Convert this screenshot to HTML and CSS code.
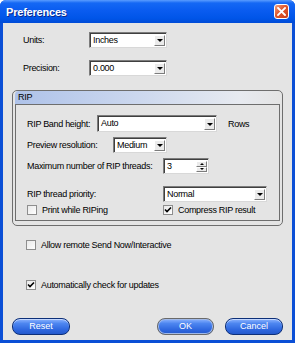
FILE: index.html
```html
<!DOCTYPE html>
<html lang="en">
<head>
    <meta charset="UTF-8">
    <title>Preferences</title>
    <link rel="stylesheet" href="styles.css">
</head>
<body>
    <div class="window">
        <!-- Title bar -->
        <div class="titlebar">
            <span class="title">Preferences</span>
            <span class="close">
                <svg width="9" height="9" viewBox="0 0 9 9"><path d="M1 1 L8 8 M8 1 L1 8" stroke="#fff" stroke-width="1.8" stroke-linecap="square"/></svg>
            </span>
        </div>

        <div class="client">
            <div class="top">
                <div class="row">
                    <span class="label label-units">Units:</span>
                    <div class="select w78"><span class="value">Inches</span><span class="arrow"></span></div>
                </div>
                <div class="row row-gap">
                    <span class="label label-units">Precision:</span>
                    <div class="select w78"><span class="value">0.000</span><span class="arrow"></span></div>
                </div>
            </div>

            <!-- RIP group -->
            <div class="group">
                <div class="group-title">RIP</div>
                <div class="group-body">
                    <div class="row tall">
                        <span class="label label-band">RIP Band height:</span>
                        <div class="select w120 tall"><span class="value">Auto</span><span class="arrow"></span></div>
                        <span class="unit">Rows</span>
                    </div>
                    <div class="row gap5">
                        <span class="label label-preview">Preview resolution:</span>
                        <div class="select w54"><span class="value">Medium</span><span class="arrow"></span></div>
                    </div>
                    <div class="row gap5">
                        <span class="label label-wide">Maximum number of RIP threads:</span>
                        <div class="spinner">
                            <span class="value">3</span>
                            <span class="spin-btns">
                                <span class="spin-btn"><i class="tri-up"></i></span>
                                <span class="spin-btn"><i class="tri-down"></i></span>
                            </span>
                        </div>
                    </div>
                    <div class="row row-gap">
                        <span class="label label-wide">RIP thread priority:</span>
                        <div class="select w104"><span class="value">Normal</span><span class="arrow"></span></div>
                    </div>
                    <div class="row check-row">
                        <label class="checkbox label-wide"><span class="box"></span>Print while RIPing</label>
                        <label class="checkbox"><span class="box checked"><svg width="8" height="8" viewBox="0 0 8 8"><path d="M1 3.5 L3 5.5 L7 1.5" fill="none" stroke="#000" stroke-width="1.6"/></svg></span>Compress RIP result</label>
                    </div>
                </div>
            </div>

            <label class="checkbox option option-remote"><span class="box"></span>Allow remote Send Now/Interactive</label>
            <label class="checkbox option option-update"><span class="box checked"><svg width="8" height="8" viewBox="0 0 8 8"><path d="M1 3.5 L3 5.5 L7 1.5" fill="none" stroke="#000" stroke-width="1.6"/></svg></span>Automatically check for updates</label>

            <div class="buttons">
                <span class="button">Reset</span>
                <span class="spacer"></span>
                <span class="button default">OK</span>
                <span class="button">Cancel</span>
            </div>
        </div>
    </div>
</body>
</html>
```
FILE: styles.css
```css
body {
    margin: 0;
    font-family: 'Liberation Sans', Arial, sans-serif;
    font-size: 9px;
    letter-spacing: -0.3px;
    color: #000;
    background: #fff;
}

.window {
    width: 295px;
    height: 343px;
    display: flex;
    flex-direction: column;
    background: #0b4fd6;
    border-radius: 6px 6px 0 0;
    overflow: hidden;
}

.titlebar {
    height: 23px;
    flex: none;
    display: flex;
    align-items: center;
    justify-content: space-between;
    padding: 0 6px 0 6px;
    background: linear-gradient(#5a9cff 0, #1568f4 3px, #0a5cf0 45%, #0055e8 80%, #004bd6 100%);
}

.title {
    color: #fff;
    font-weight: bold;
    font-size: 11px;
    letter-spacing: -0.2px;
    text-shadow: 1px 1px #0b2a8c;
}

.close {
    width: 13px;
    height: 13px;
    border: 1px solid #fff;
    border-radius: 3px;
    display: flex;
    align-items: center;
    justify-content: center;
    background: linear-gradient(135deg, #f0a080, #e0562c 45%, #c8401a);
}

.client {
    flex: 1;
    margin: 0 3px 3px;
    padding: 9px 9px 0;
    background: #e4e4e4;
    display: flex;
    flex-direction: column;
}

.top {
    padding-left: 11px;
}

.row {
    display: flex;
    align-items: center;
    height: 16px;
}

.row.tall {
    height: 17px;
}

.row-gap {
    margin-top: 12px;
}

.gap5 {
    margin-top: 5px;
}

.label {
    flex: none;
}

.label-units { width: 66px; }
.label-band { width: 70px; }
.label-preview { width: 86px; }
.label-wide { width: 136px; }

/* combo boxes */
.select {
    box-sizing: border-box;
    height: 16px;
    display: flex;
    align-items: stretch;
    background: #fff;
    border-top: 1px solid #7c7c7c;
    border-left: 1px solid #7c7c7c;
    border-right: 1px solid #d8d8d8;
    border-bottom: 1px solid #d8d8d8;
    box-shadow: inset 1px 1px #3f3f3f;
    padding: 2px 1px 1px 2px;
}

.select.tall { height: 17px; }
.w78 { width: 78px; }
.w120 { width: 120px; }
.w54 { width: 54px; }
.w104 { width: 104px; }

.value {
    flex: 1;
    padding-left: 1px;
    line-height: 11px;
}

.arrow {
    width: 11px;
    flex: none;
    box-sizing: border-box;
    background: #ebebeb;
    border-top: 1px solid #fff;
    border-left: 1px solid #fff;
    border-right: 1px solid #7c7c7c;
    border-bottom: 1px solid #7c7c7c;
    display: flex;
    align-items: center;
    justify-content: center;
}

.arrow::after {
    content: '';
    border-left: 3px solid transparent;
    border-right: 3px solid transparent;
    border-top: 3px solid #000;
}

.unit {
    margin-left: 11px;
}

/* spinner */
.spinner {
    box-sizing: border-box;
    width: 46px;
    height: 16px;
    display: flex;
    background: #fff;
    border-top: 1px solid #7c7c7c;
    border-left: 1px solid #7c7c7c;
    border-right: 1px solid #d8d8d8;
    border-bottom: 1px solid #d8d8d8;
    box-shadow: inset 1px 1px #3f3f3f;
    padding: 2px 1px 1px 2px;
}

.spin-btns {
    width: 11px;
    display: flex;
    flex-direction: column;
}

.spin-btn {
    flex: 1;
    box-sizing: border-box;
    background: #ebebeb;
    border-top: 1px solid #fff;
    border-left: 1px solid #fff;
    border-right: 1px solid #7c7c7c;
    border-bottom: 1px solid #7c7c7c;
    display: flex;
    align-items: center;
    justify-content: center;
}

.tri-up {
    border-left: 2px solid transparent;
    border-right: 2px solid transparent;
    border-bottom: 2px solid #000;
}

.tri-down {
    border-left: 2px solid transparent;
    border-right: 2px solid transparent;
    border-top: 2px solid #000;
}

/* group box */
.group {
    margin-top: 14px;
    border: 1px solid #6e6e6e;
    border-radius: 5px;
    padding: 0 2px 4px;
    background: #e4e4e4;
}

.group-title {
    height: 13px;
    line-height: 13px;
    padding-left: 3px;
    border-radius: 4px 4px 0 0;
    background: linear-gradient(to right, #aec2e9, #cbd7ee 45%, #e7eaf0 85%, #e4e4e4);
}

.group-body {
    border: 1px solid #6e6e6e;
    padding: 10px 0 5px 11px;
}

.check-row {
    margin-top: 3px;
    height: 10px;
}

/* check boxes */
.checkbox {
    display: flex;
    align-items: center;
    gap: 5px;
}

.box {
    box-sizing: border-box;
    width: 10px;
    height: 10px;
    flex: none;
    border: 1px solid #8e8e8e;
    background: linear-gradient(135deg, #e9e9e9, #fff);
    display: flex;
    align-items: center;
    justify-content: center;
}

.option {
    padding-left: 14px;
    height: 10px;
}

.option-remote {
    margin-top: 14px;
}

.option-update {
    margin-top: 30px;
}

/* buttons */
.buttons {
    margin-top: 28px;
    display: flex;
    gap: 11px;
}

.spacer {
    flex: 1;
}

.button {
    box-sizing: border-box;
    width: 58px;
    height: 17px;
    border: 1px solid #0d2f78;
    border-radius: 8px;
    color: #fff;
    text-align: center;
    line-height: 15px;
    letter-spacing: 0;
    background: linear-gradient(#8db4ff 0, #4d86f0 30%, #2f68e0 70%, #2459cc 100%);
    box-shadow: inset 0 1px rgba(255, 255, 255, 0.5);
}

.button.default {
    width: 57px;
    border: 1px solid #6a6a6a;
    box-shadow: inset 0 0 0 1px #9fb8e8;
}
```
